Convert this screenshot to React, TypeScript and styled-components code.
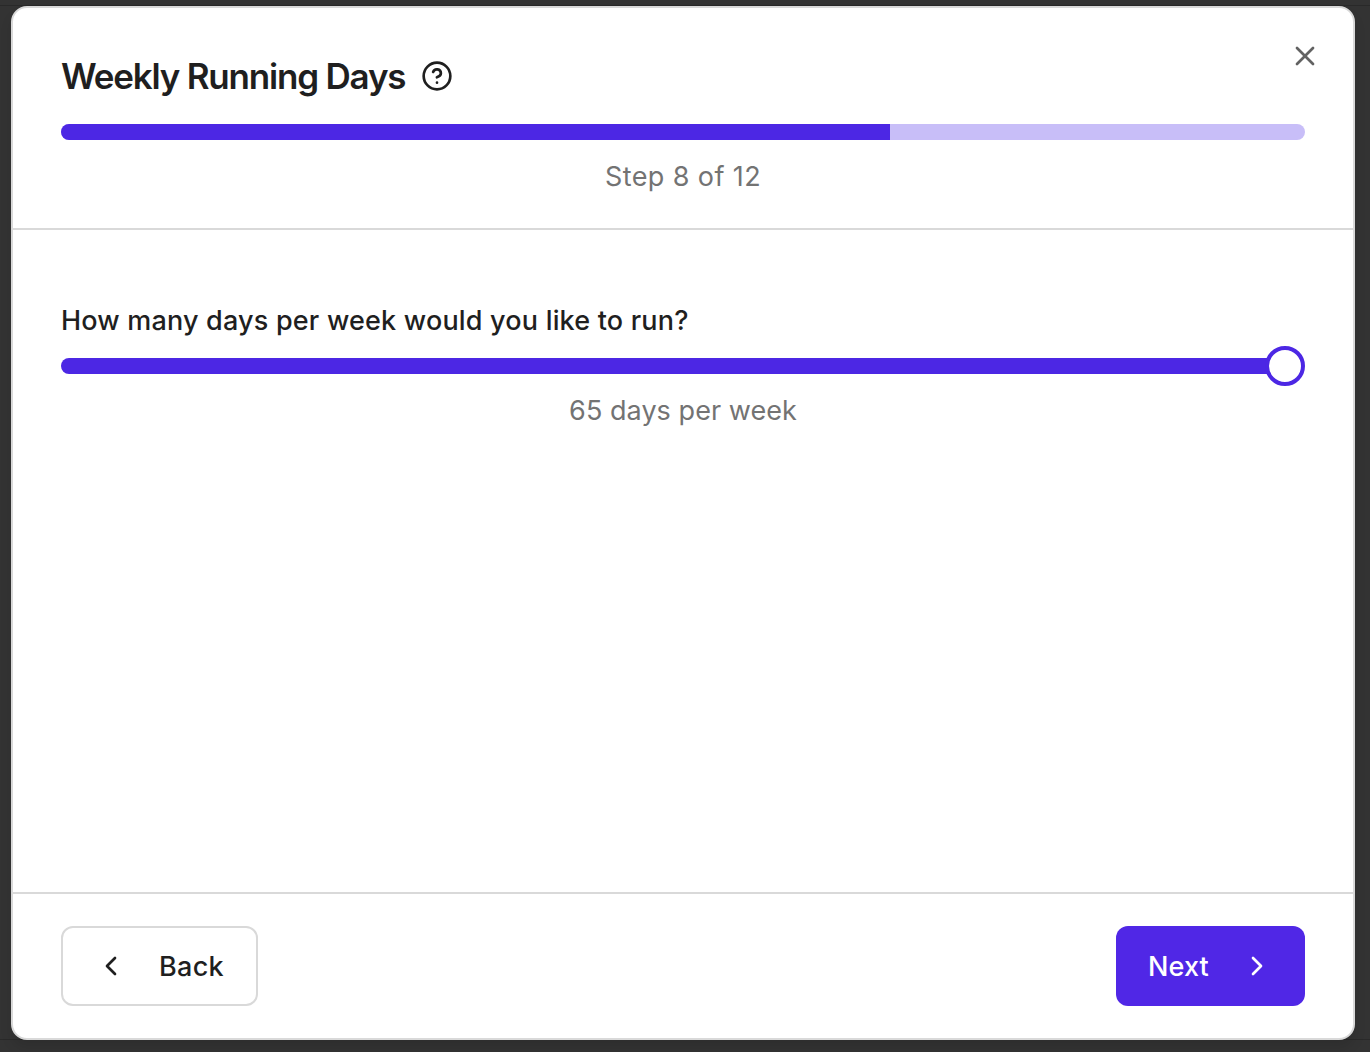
import React from 'react';
import styled, { createGlobalStyle } from 'styled-components';
import { ChevronLeft, ChevronRight, CircleHelp, X } from 'lucide-react';

const Global = createGlobalStyle`
  *, *::before, *::after { box-sizing: border-box; }
  body { margin: 0; background: #333; font-family: Inter, "Liberation Sans", sans-serif; color: #1f1f1f; overflow: hidden; }
`;
const Backdrop = styled.main`
  height: 1052px;
  padding: 6px 15px 12px 11px;
  background: linear-gradient(#292929, #292929) 0 5px / 100% 1px no-repeat,
    linear-gradient(#292929, #292929) 0 1039px / 100% 1px no-repeat, #333;
`;
const Dialog = styled.section`
  position: relative;
  height: 1034px;
  display: flex;
  flex-direction: column;
  background: #fff;
  border: 2px solid #d9d9d9;
  border-radius: 16px;
  box-shadow: 0 8px 12px rgba(0, 0, 0, 0.1);
`;
const Header = styled.header`
  height: 222px;
  padding: 44px 48px 0;
  border-bottom: 2px solid #d9d9d9;
`;
const TitleRow = styled.div`
  display: flex;
  align-items: center;
  gap: 16px;
  height: 48px;
`;
const Title = styled.h1`
  margin: 0;
  font-size: 35px;
  line-height: 48px;
  font-weight: 600;
  letter-spacing: -1.2px;
  white-space: nowrap;
`;
const Close = styled.button`
  position: absolute;
  top: 32px;
  right: 32px;
  width: 32px;
  height: 32px;
  padding: 0;
  border: 0;
  background: none;
  color: #626262;
  svg { display: block; }
`;
const Track = styled.div`
  display: flex;
  height: 16px;
  margin-top: 24px;
  border-radius: 8px;
  background: #c8bef8;
  overflow: hidden;
`;
const Fill = styled.div`
  background: #4c27e4;
`;
const Caption = styled.p<{ $tracking: number }>`
  margin: 16px 0 0;
  font-size: 27px;
  line-height: 41px;
  letter-spacing: ${p => p.$tracking}px;
  text-align: center;
  color: #737373;
`;
const Body = styled.div`
  flex: 1;
  padding: 72px 48px 0;
`;
const Question = styled.label`
  display: block;
  font-size: 27px;
  line-height: 38px;
  font-weight: 500;
  letter-spacing: 0.19px;
`;
const Slider = styled.div`
  display: flex;
  align-items: center;
  height: 40px;
  margin-top: 6px;
`;
const Range = styled.div`
  flex: 1;
  height: 16px;
  margin-right: -4px;
  border-radius: 8px 0 0 8px;
  background: #4c27e4;
`;
const Thumb = styled.div`
  width: 40px;
  height: 40px;
  border: 4px solid #4c27e4;
  border-radius: 50%;
  background: #fff;
`;
const DaysCaption = styled(Caption)`
  margin-top: 4px;
`;
const Footer = styled.footer`
  height: 146px;
  padding: 32px 48px;
  display: flex;
  justify-content: space-between;
  border-top: 2px solid #d9d9d9;
`;
const Button = styled.button<{ $primary?: boolean }>`
  display: flex;
  align-items: center;
  justify-content: space-between;
  width: ${p => (p.$primary ? 189 : 197)}px;
  height: 80px;
  padding: 0 32px;
  border: ${p => (p.$primary ? '0' : '2px solid #d9d9d9')};
  border-radius: 12px;
  background: ${p => (p.$primary ? '#5027e6' : '#fff')};
  color: ${p => (p.$primary ? '#fff' : '#1f1f1f')};
  font: 500 27px/40px Inter, "Liberation Sans", sans-serif;
  letter-spacing: ${p => (p.$primary ? 0.1 : 0.3)}px;
`;
const ButtonLabel = styled.span`
  padding-top: 2px;
`;

export default function App() {
  return (
    <>
      <Global />
      <Backdrop>
        <Dialog role="dialog" aria-labelledby="title">
          <Header>
            <TitleRow>
              <Title id="title">Weekly Running Days</Title>
              <CircleHelp size={32} strokeWidth={2} />
            </TitleRow>
            <Track><Fill style={{ width: `${(8 / 12) * 100}%` }} /></Track>
            <Caption $tracking={0.4}>Step 8 of 12</Caption>
          </Header>
          <Body>
            <Question>How many days per week would you like to run?</Question>
            <Slider><Range /><Thumb /></Slider>
            <DaysCaption $tracking={0.05}>65 days per week</DaysCaption>
          </Body>
          <Footer>
            <Button><ChevronLeft size={32} /><ButtonLabel>Back</ButtonLabel></Button>
            <Button $primary><ButtonLabel>Next</ButtonLabel><ChevronRight size={32} /></Button>
          </Footer>
          <Close aria-label="Close"><X size={32} /></Close>
        </Dialog>
      </Backdrop>
    </>
  );
}
